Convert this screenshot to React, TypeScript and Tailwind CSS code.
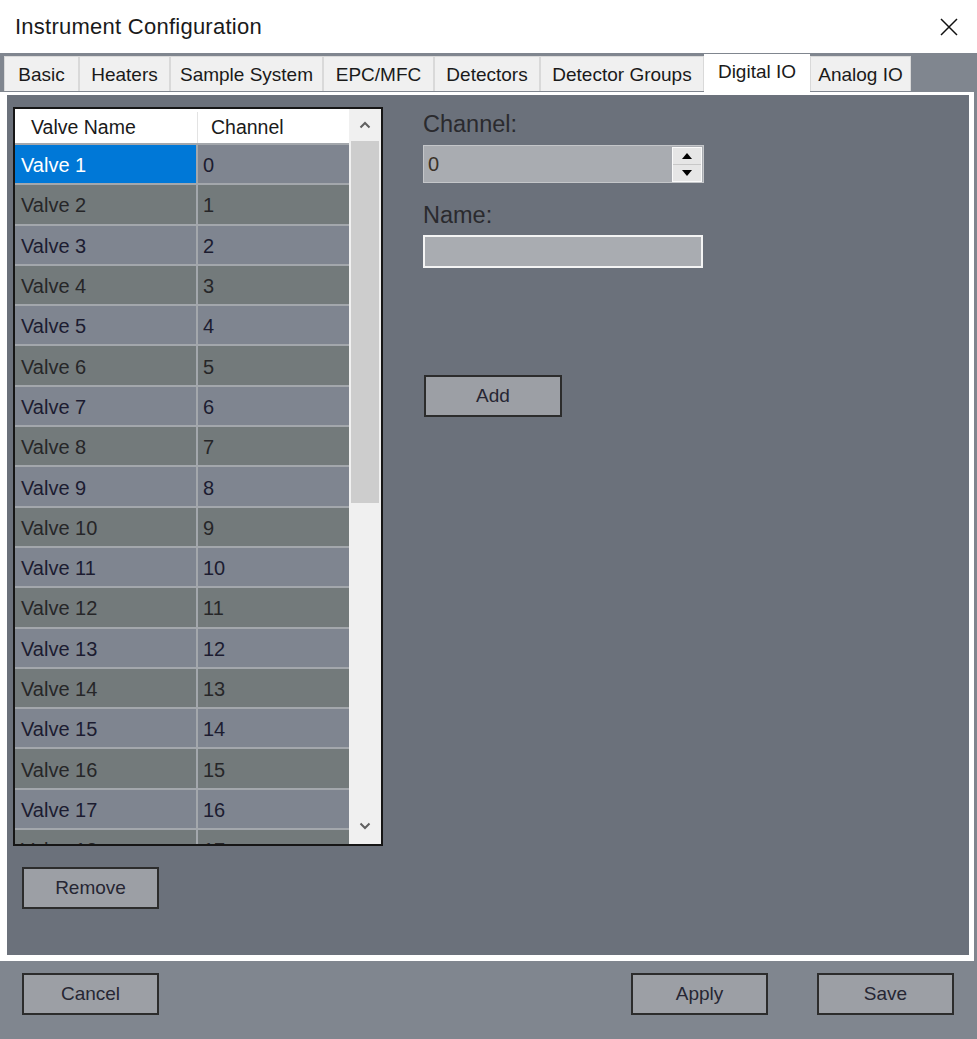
import React from "react";

const tabs = [
  { label: "Basic", w: "w-[75px]" },
  { label: "Heaters", w: "w-[91px]" },
  { label: "Sample System", w: "w-[153px]" },
  { label: "EPC/MFC", w: "w-[111px]" },
  { label: "Detectors", w: "w-[106px]" },
  { label: "Detector Groups", w: "w-[164px]" },
  { label: "Digital IO", w: "w-[106px]", active: true },
  { label: "Analog IO", w: "w-[101px]" },
];

const valves = Array.from({ length: 18 }, (_, i) => ({ name: `Valve ${i + 1}`, channel: i }));

function Chevron({ down }: { down?: boolean }) {
  return (
    <svg width="12" height="8" viewBox="0 0 12 8">
      <path
        d={down ? "M1.5 1.5 L6 6 L10.5 1.5" : "M1.5 6.5 L6 2 L10.5 6.5"}
        fill="none"
        stroke="#606060"
        strokeWidth="2"
      />
    </svg>
  );
}

function Button({ label, w = "w-[138px]" }: { label: string; w?: string }) {
  return (
    <div
      className={`${w} h-[42px] border-2 border-[#2c2c2c] bg-[#9c9fa5] flex items-center justify-center text-[19px] text-[#262633]`}
    >
      {label}
    </div>
  );
}

export default function App() {
  return (
    <div className="w-[977px] h-[1039px] flex flex-col bg-[#80868f] overflow-hidden font-['Liberation_Sans',Arial,sans-serif]">
      {/* Title bar */}
      <div className="h-[53px] shrink-0 bg-white flex items-center justify-between pl-[15px] pr-[20px]">
        <span className="text-[22px] tracking-[0.25px] text-[#1a1a1a] leading-none pt-[1px]">
          Instrument Configuration
        </span>
        <svg width="20" height="20" viewBox="0 0 20 20" className="mr-[-2px]">
          <path d="M2 2 L18 18 M18 2 L2 18" stroke="#111" strokeWidth="1.5" />
        </svg>
      </div>

      {/* Tab strip */}
      <div className="h-[39px] shrink-0 flex items-end pl-[4px]">
        {tabs.map((t) =>
          t.active ? (
            <div
              key={t.label}
              className={`${t.w} h-[38px] bg-white flex items-center justify-center text-[19px] text-[#1a1a1a] pb-[1px]`}
            >
              {t.label}
            </div>
          ) : (
            <div
              key={t.label}
              className={`${t.w} h-[35px] mb-[1px] bg-[#f0f0f0] border-l border-r border-t border-[#d9d9d9] flex items-center justify-center text-[19px] text-[#1a1a1a] pt-[3px]`}
            >
              {t.label}
            </div>
          )
        )}
      </div>

      {/* Tab page frame */}
      <div className="h-[869px] shrink-0 mr-[3px] bg-white pl-[7px] pt-[3px] pr-[5px] pb-[6px]">
        <div className="h-full bg-[#6b717b] flex items-start pl-[6px] pt-[12px]">
          {/* Left: grid + remove */}
          <div className="flex flex-col">
            <div className="w-[370px] h-[739px] border-2 border-[#161616] flex">
              <div className="w-[334px] flex flex-col">
                {/* Header */}
                <div className="h-[36px] shrink-0 bg-white flex border-b-2 border-[#a3a7ac] text-[19.5px] text-[#1a1a1a] pt-[3px]">
                  <div className="w-[183px] border-r border-[#e3e3e3] flex items-center pl-[16px]">
                    Valve Name
                  </div>
                  <div className="flex-1 flex items-center pl-[13px]">Channel</div>
                </div>
                {/* Rows */}
                <div className="h-[699px] overflow-hidden">
                  {valves.map((v, i) => {
                    const odd = i % 2 === 0;
                    const rowBg = odd ? "bg-[#7f8590]" : "bg-[#737a7b]";
                    const txt = odd ? "text-[#1c1c30]" : "text-[#262628]";
                    return (
                      <div key={v.name} className={`h-[40.3px] flex border-b-2 border-[#a3a7ac] text-[20px] ${txt}`}>
                        <div
                          className={`w-[183px] border-r-2 border-[#a3a7ac] flex items-center pl-[6px] pt-[2px] ${
                            i === 0 ? "bg-[#0078d7] text-white" : rowBg
                          }`}
                        >
                          {v.name}
                        </div>
                        <div className={`flex-1 flex items-center pl-[5px] pt-[2px] ${rowBg}`}>{v.channel}</div>
                      </div>
                    );
                  })}
                </div>
              </div>
              {/* Vertical scrollbar */}
              <div className="w-[32px] bg-[#f0f0f0] flex flex-col">
                <div className="h-[32px] flex items-center justify-center">
                  <Chevron />
                </div>
                <div className="h-[362px] mx-[2px] bg-[#cdcdcd]" />
                <div className="flex-1" />
                <div className="h-[34px] flex items-center justify-center pb-[2px]">
                  <Chevron down />
                </div>
              </div>
            </div>
            <div className="ml-[9px] mt-[21px]">
              <Button label="Remove" w="w-[137px]" />
            </div>
          </div>

          {/* Right: editor */}
          <div className="ml-[40px] flex flex-col">
            <div className="mt-[5px] h-[24px] leading-[24px] text-[23.5px] text-[#2a2a2e]">Channel:</div>
            <div className="mt-[9px] w-[281px] h-[38px] bg-[#a9acb1] border border-[#c4c6c9] flex items-center">
              <span className="flex-1 pl-[4px] text-[20px] text-[#3a3228]">0</span>
              <div className="w-[30px] h-[35px] mr-[1px] bg-[#e6e6e6] border border-[#fafafa] flex flex-col">
                <div className="flex-1 flex items-center justify-center border-b border-[#c8c8c8]">
                  <svg width="10" height="6" viewBox="0 0 10 6">
                    <path d="M0 6 L5 0 L10 6 Z" fill="#000" />
                  </svg>
                </div>
                <div className="flex-1 flex items-center justify-center">
                  <svg width="10" height="6" viewBox="0 0 10 6">
                    <path d="M0 0 L5 6 L10 0 Z" fill="#000" />
                  </svg>
                </div>
              </div>
            </div>
            <div className="mt-[20px] h-[24px] leading-[24px] text-[23.5px] text-[#2a2a2e]">Name:</div>
            <div className="mt-[8px] w-[280px] h-[33px] bg-[#a9acb1] border-2 border-[#f4f4f4]" />
            <div className="mt-[107px] ml-[1px]">
              <Button label="Add" />
            </div>
          </div>
        </div>
      </div>

      {/* Footer buttons */}
      <div className="flex-1 flex items-start pt-[12px] pl-[22px] pr-[23px]">
        <Button label="Cancel" w="w-[137px]" />
        <div className="flex-1" />
        <Button label="Apply" w="w-[137px]" />
        <div className="w-[49px]" />
        <Button label="Save" w="w-[137px]" />
      </div>
    </div>
  );
}
